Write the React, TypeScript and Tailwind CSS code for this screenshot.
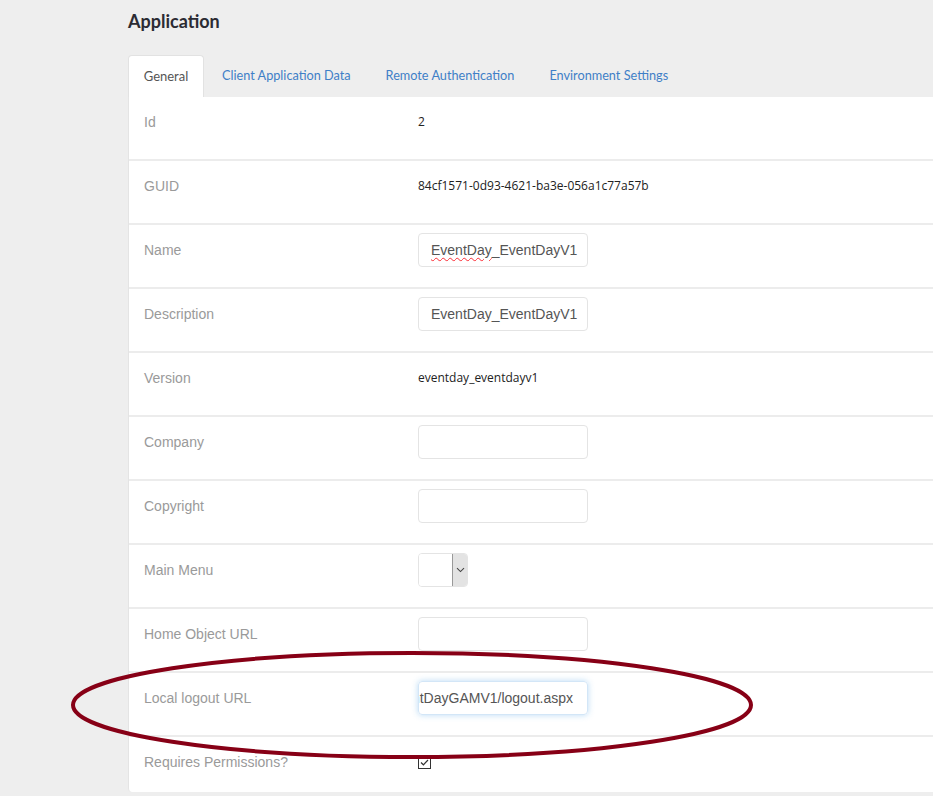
import React from "react";

type Row = {
  label: string;
  kind: "text" | "input" | "select" | "focus" | "check";
  value?: string;
  squiggle?: boolean;
};

const rows: Row[] = [
  { label: "Id", kind: "text", value: "2" },
  { label: "GUID", kind: "text", value: "84cf1571-0d93-4621-ba3e-056a1c77a57b" },
  { label: "Name", kind: "input", value: "EventDay_EventDayV1", squiggle: true },
  { label: "Description", kind: "input", value: "EventDay_EventDayV1" },
  { label: "Version", kind: "text", value: "eventday_eventdayv1" },
  { label: "Company", kind: "input" },
  { label: "Copyright", kind: "input" },
  { label: "Main Menu", kind: "select" },
  { label: "Home Object URL", kind: "input" },
  { label: "Local logout URL", kind: "focus", value: "http://localhost/EventDayGAMV1/logout.aspx" },
  { label: "Requires Permissions?", kind: "check" },
];

const tabs = ["Client Application Data", "Remote Authentication", "Environment Settings"];

function Field({ row }: { row: Row }) {
  if (row.kind === "text") {
    return (
      <div className="pt-[15px] text-[12px] leading-[20px] text-[#222] font-['Open_Sans',sans-serif]">
        {row.value}
      </div>
    );
  }
  if (row.kind === "input") {
    return (
      <div className="mt-2 flex h-[34px] w-[170px] items-center rounded border border-[#e4e4e4] px-3 text-[14px] text-[#555] font-['Liberation_Sans',Arial,sans-serif]">
        {row.squiggle ? (
          <>
            <span className="underline decoration-wavy decoration-red-500 decoration-1 underline-offset-2">EventDay</span>
            <span>_EventDayV1</span>
          </>
        ) : (
          row.value
        )}
      </div>
    );
  }
  if (row.kind === "select") {
    return (
      <div className="mt-2 flex h-[34px] w-[50px] overflow-hidden rounded border border-[#e4e4e4]">
        <div className="flex-1 bg-white" />
        <div className="flex w-[15px] items-center justify-center border-l border-[#999] bg-[#e3e3e3]">
          <svg width="9" height="6" viewBox="0 0 9 6" fill="none">
            <path d="M1 1.2 L4.5 4.6 L8 1.2" stroke="#444" strokeWidth="1.1" />
          </svg>
        </div>
      </div>
    );
  }
  if (row.kind === "focus") {
    return (
      <div className="mt-2 flex h-[34px] w-[170px] items-center justify-end overflow-hidden whitespace-nowrap rounded border border-[#d3e6f7] pr-[14px] text-[14px] text-[#555] shadow-[0_0_6px_rgba(102,175,233,0.45)] font-['Liberation_Sans',Arial,sans-serif]">
        {row.value}
      </div>
    );
  }
  return (
    <div className="pt-[19px]">
      <div className="flex h-[13px] w-[13px] items-center justify-center border border-[#333] bg-white">
        <svg width="9" height="7" viewBox="0 0 9 7" fill="none">
          <path d="M1 3.5 L3.4 5.8 L8 1" stroke="#333" strokeWidth="1.2" />
        </svg>
      </div>
    </div>
  );
}

export default function App() {
  return (
    <div className="relative h-[796px] w-[933px] overflow-hidden bg-[#eeeeee]">
      <div className="pl-[128px]">
        <h1 className="pt-[9px] text-[18px] font-bold leading-[24px] text-[#2b2b33] font-['Lato',sans-serif]">
          Application
        </h1>

        <div className="mt-[22px] flex items-end">
          <div className="flex h-[42px] w-[76px] items-center justify-center rounded-t border border-b-0 border-[#e2e2e2] bg-white text-[13px] text-[#555] font-['Lato',sans-serif]">
            General
          </div>
          <div className="flex h-[42px] items-center gap-[35px] pl-[18px] text-[12.7px] text-[#3f7fc7] font-['Lato',sans-serif]">
            {tabs.map((t) => (
              <span key={t}>{t}</span>
            ))}
          </div>
        </div>

        <div className="w-[840px] rounded-b border-l border-[#e4e4e4] bg-white">
          {rows.map((row, i) => (
            <div
              key={row.label}
              className={
                i === rows.length - 1
                  ? "flex h-[55px]"
                  : "flex h-[64px] border-b-2 border-[#ececec]"
              }
            >
              <div className="w-[289px] pl-[15px] pt-[15px] text-[14px] leading-[20px] text-[#9a9a9a] font-['Liberation_Sans',Arial,sans-serif]">
                {row.label}
              </div>
              <Field row={row} />
            </div>
          ))}
        </div>
      </div>

      <svg
        className="pointer-events-none absolute left-0 top-0"
        width="933"
        height="796"
        viewBox="0 0 933 796"
      >
        <ellipse cx="412" cy="705" rx="339" ry="52" fill="none" stroke="#870016" strokeWidth="4" />
      </svg>
    </div>
  );
}
